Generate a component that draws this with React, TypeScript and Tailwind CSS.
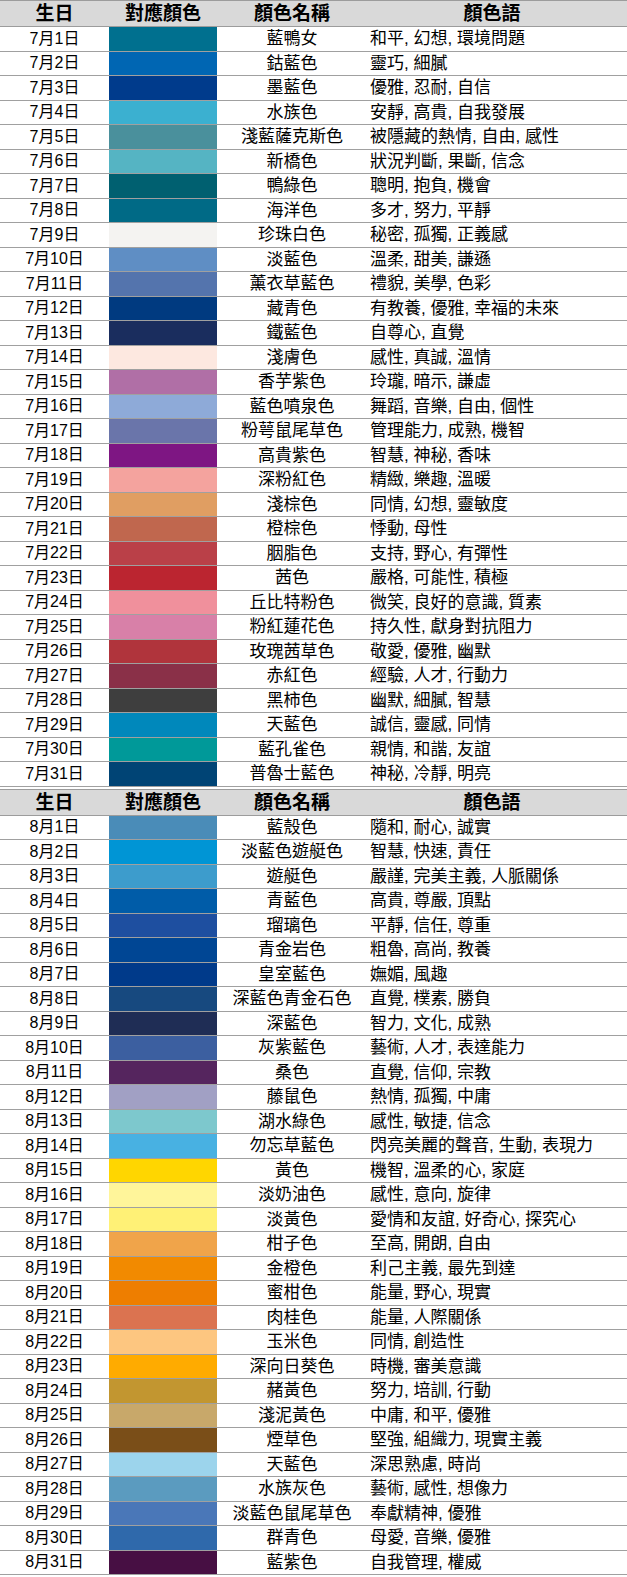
type Row = [string, string, string, string];

const july: Row[] = [
    ['7月1日', '#00708f', '藍鴨女', '和平, 幻想, 環境問題'],
    ['7月2日', '#0066b3', '鈷藍色', '靈巧, 細膩'],
    ['7月3日', '#003b8c', '墨藍色', '優雅, 忍耐, 自信'],
    ['7月4日', '#3bb0d0', '水族色', '安靜, 高貴, 自我發展'],
    ['7月5日', '#4a909c', '淺藍薩克斯色', '被隱藏的熱情, 自由, 感性'],
    ['7月6日', '#55b4c3', '新橋色', '狀況判斷, 果斷, 信念'],
    ['7月7日', '#006070', '鴨綠色', '聰明, 抱負, 機會'],
    ['7月8日', '#006a86', '海洋色', '多才, 努力, 平靜'],
    ['7月9日', '#f4f3f1', '珍珠白色', '秘密, 孤獨, 正義感'],
    ['7月10日', '#5f8ec4', '淡藍色', '溫柔, 甜美, 謙遜'],
    ['7月11日', '#5474ad', '薰衣草藍色', '禮貌, 美學, 色彩'],
    ['7月12日', '#003a80', '藏青色', '有教養, 優雅, 幸福的未來'],
    ['7月13日', '#1a2d5e', '鐵藍色', '自尊心, 直覺'],
    ['7月14日', '#fde8e0', '淺膚色', '感性, 真誠, 溫情'],
    ['7月15日', '#b06fa6', '香芋紫色', '玲瓏, 暗示, 謙虛'],
    ['7月16日', '#8eaad8', '藍色噴泉色', '舞蹈, 音樂, 自由, 個性'],
    ['7月17日', '#6a75aa', '粉萼鼠尾草色', '管理能力, 成熟, 機智'],
    ['7月18日', '#7e1683', '高貴紫色', '智慧, 神秘, 香味'],
    ['7月19日', '#f4a39e', '深粉紅色', '精緻, 樂趣, 溫暖'],
    ['7月20日', '#e09e62', '淺棕色', '同情, 幻想, 靈敏度'],
    ['7月21日', '#c0674e', '橙棕色', '悸動, 母性'],
    ['7月22日', '#ba4048', '胭脂色', '支持, 野心, 有彈性'],
    ['7月23日', '#bb2530', '茜色', '嚴格, 可能性, 積極'],
    ['7月24日', '#f0909c', '丘比特粉色', '微笑, 良好的意識, 質素'],
    ['7月25日', '#d880a8', '粉紅蓮花色', '持久性, 獻身對抗阻力'],
    ['7月26日', '#b0343c', '玫瑰茜草色', '敬愛, 優雅, 幽默'],
    ['7月27日', '#8a3048', '赤紅色', '經驗, 人才, 行動力'],
    ['7月28日', '#3e3e3e', '黑柿色', '幽默, 細膩, 智慧'],
    ['7月29日', '#0088bb', '天藍色', '誠信, 靈感, 同情'],
    ['7月30日', '#009999', '藍孔雀色', '親情, 和諧, 友誼'],
    ['7月31日', '#004475', '普魯士藍色', '神秘, 冷靜, 明亮'],
];

const august: Row[] = [
    ['8月1日', '#4a8cb8', '藍殼色', '隨和, 耐心, 誠實'],
    ['8月2日', '#0095d5', '淡藍色遊艇色', '智慧, 快速, 責任'],
    ['8月3日', '#3d9ccc', '遊艇色', '嚴謹, 完美主義, 人脈關係'],
    ['8月4日', '#005ca8', '青藍色', '高貴, 尊嚴, 頂點'],
    ['8月5日', '#1e4fa0', '瑠璃色', '平靜, 信任, 尊重'],
    ['8月6日', '#004694', '青金岩色', '粗魯, 高尚, 教養'],
    ['8月7日', '#003a8a', '皇室藍色', '嫵媚, 風趣'],
    ['8月8日', '#17497f', '深藍色青金石色', '直覺, 樸素, 勝負'],
    ['8月9日', '#1f2d55', '深藍色', '智力, 文化, 成熟'],
    ['8月10日', '#3c5fa0', '灰紫藍色', '藝術, 人才, 表達能力'],
    ['8月11日', '#55255e', '桑色', '直覺, 信仰, 宗教'],
    ['8月12日', '#a1a0c4', '藤鼠色', '熱情, 孤獨, 中庸'],
    ['8月13日', '#7dc8cd', '湖水綠色', '感性, 敏捷, 信念'],
    ['8月14日', '#48b1e2', '勿忘草藍色', '閃亮美麗的聲音, 生動, 表現力'],
    ['8月15日', '#ffd600', '黃色', '機智, 溫柔的心, 家庭'],
    ['8月16日', '#fff59a', '淡奶油色', '感性, 意向, 旋律'],
    ['8月17日', '#fff176', '淡黃色', '愛情和友誼, 好奇心, 探究心'],
    ['8月18日', '#f0a44a', '柑子色', '至高, 開朗, 自由'],
    ['8月19日', '#f28a00', '金橙色', '利己主義, 最先到達'],
    ['8月20日', '#ee7e00', '蜜柑色', '能量, 野心, 現實'],
    ['8月21日', '#db7350', '肉桂色', '能量, 人際關係'],
    ['8月22日', '#fdc680', '玉米色', '同情, 創造性'],
    ['8月23日', '#ffab00', '深向日葵色', '時機, 審美意識'],
    ['8月24日', '#c29630', '赭黃色', '努力, 培訓, 行動'],
    ['8月25日', '#c8a86a', '淺泥黃色', '中庸, 和平, 優雅'],
    ['8月26日', '#7a4e18', '煙草色', '堅強, 組織力, 現實主義'],
    ['8月27日', '#9cd4ec', '天藍色', '深思熟慮, 時尚'],
    ['8月28日', '#5b9bbf', '水族灰色', '藝術, 感性, 想像力'],
    ['8月29日', '#4a77b8', '淡藍色鼠尾草色', '奉獻精神, 優雅'],
    ['8月30日', '#2f69ab', '群青色', '母愛, 音樂, 優雅'],
    ['8月31日', '#470f43', '藍紫色', '自我管理, 權威'],
];

const ColorTable = ({rows}: {rows: Row[]}) => (
    <div className="w-full">
        <div className="flex h-[27px] items-center border-y border-[#9c9c9c] bg-[#d9d9d9] text-[19px] font-bold leading-none">
            <div className="w-[109px] text-center">生日</div>
            <div className="w-[108px] text-center">對應顏色</div>
            <div className="w-[150px] text-center">顏色名稱</div>
            <div className="flex-1 pr-[10px] text-center">顏色語</div>
        </div>
        {rows.map(([date, color, name, meaning]) => (
            <div
                key={date}
                className="flex h-[24.5px] items-stretch border-b border-[#a0a0a0] text-[17px] leading-none">
                <div className="flex w-[109px] items-center justify-center text-[16px]">{date}</div>
                <div className="w-[108px]" style={{backgroundColor: color}} />
                <div className="flex w-[150px] items-center justify-center whitespace-nowrap">{name}</div>
                <div className="flex flex-1 items-center whitespace-nowrap pl-[3px]">{meaning}</div>
            </div>
        ))}
    </div>
);

export default function App() {
    return (
        <div
            className="flex w-[627px] flex-col gap-[2px] bg-white text-black"
            style={{fontFamily: '"Liberation Sans", "Noto Sans CJK TC", sans-serif'}}>
            <ColorTable rows={july} />
            <ColorTable rows={august} />
        </div>
    );
}
